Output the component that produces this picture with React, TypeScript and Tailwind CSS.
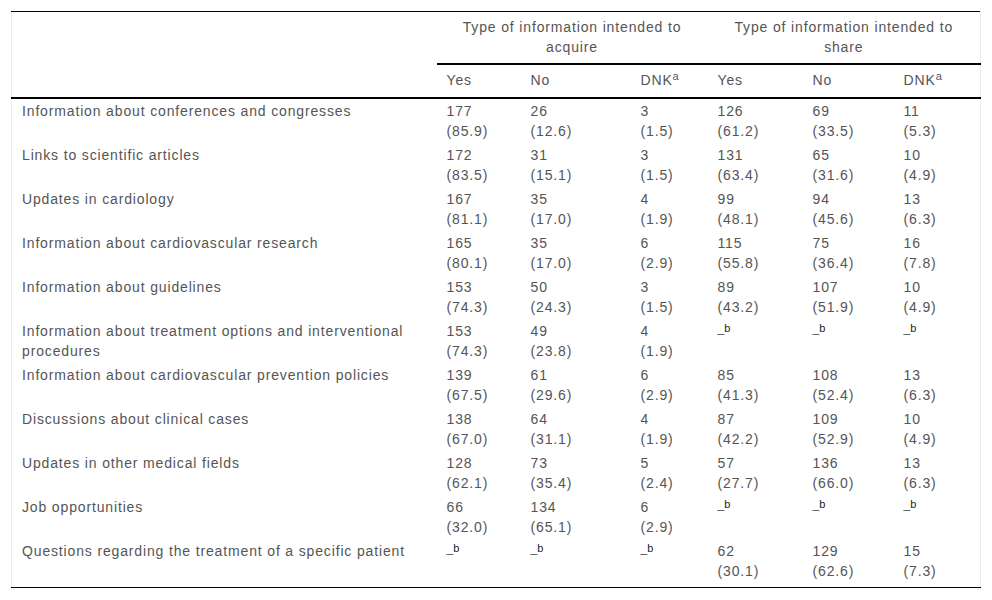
import React from "react";

type Cell = [string, string] | null;
const rows: { label: string[]; cells: Cell[] }[] = [
  { label: ["Information about conferences and congresses"], cells: [["177", "(85.9)"], ["26", "(12.6)"], ["3", "(1.5)"], ["126", "(61.2)"], ["69", "(33.5)"], ["11", "(5.3)"]] },
  { label: ["Links to scientific articles"], cells: [["172", "(83.5)"], ["31", "(15.1)"], ["3", "(1.5)"], ["131", "(63.4)"], ["65", "(31.6)"], ["10", "(4.9)"]] },
  { label: ["Updates in cardiology"], cells: [["167", "(81.1)"], ["35", "(17.0)"], ["4", "(1.9)"], ["99", "(48.1)"], ["94", "(45.6)"], ["13", "(6.3)"]] },
  { label: ["Information about cardiovascular research"], cells: [["165", "(80.1)"], ["35", "(17.0)"], ["6", "(2.9)"], ["115", "(55.8)"], ["75", "(36.4)"], ["16", "(7.8)"]] },
  { label: ["Information about guidelines"], cells: [["153", "(74.3)"], ["50", "(24.3)"], ["3", "(1.5)"], ["89", "(43.2)"], ["107", "(51.9)"], ["10", "(4.9)"]] },
  { label: ["Information about treatment options and interventional", "procedures"], cells: [["153", "(74.3)"], ["49", "(23.8)"], ["4", "(1.9)"], null, null, null] },
  { label: ["Information about cardiovascular prevention policies"], cells: [["139", "(67.5)"], ["61", "(29.6)"], ["6", "(2.9)"], ["85", "(41.3)"], ["108", "(52.4)"], ["13", "(6.3)"]] },
  { label: ["Discussions about clinical cases"], cells: [["138", "(67.0)"], ["64", "(31.1)"], ["4", "(1.9)"], ["87", "(42.2)"], ["109", "(52.9)"], ["10", "(4.9)"]] },
  { label: ["Updates in other medical fields"], cells: [["128", "(62.1)"], ["73", "(35.4)"], ["5", "(2.4)"], ["57", "(27.7)"], ["136", "(66.0)"], ["13", "(6.3)"]] },
  { label: ["Job opportunities"], cells: [["66", "(32.0)"], ["134", "(65.1)"], ["6", "(2.9)"], null, null, null] },
  { label: ["Questions regarding the treatment of a specific patient"], cells: [null, null, null, ["62", "(30.1)"], ["129", "(62.6)"], ["15", "(7.3)"]] },
];

function Dash() {
  return (
    <span className="relative top-[-4px] text-[12px] leading-none tracking-normal">
      <span className="text-[#555]">_</span>
      <span className="text-[#222] text-[11px]">b</span>
    </span>
  );
}

function Sup() {
  return <span className="relative top-[-5px] text-[11px] leading-none tracking-normal">a</span>;
}

export default function App() {
  return (
    <div className="bg-white w-[992px] h-[600px] pt-[11px] pl-[11px]" style={{ fontFamily: '"Liberation Sans", Arial, sans-serif' }}>
      <table className="w-[969px] border-collapse table-fixed text-[14px] leading-[20px] tracking-[0.85px] text-[#555] border-t border-t-black border-b border-b-black border-x border-x-[#ececec]">
        <colgroup>
          <col className="w-[425px]" />
          <col className="w-[84px]" />
          <col className="w-[110px]" />
          <col className="w-[77px]" />
          <col className="w-[95px]" />
          <col className="w-[91px]" />
          <col className="w-[87px]" />
        </colgroup>
        <thead>
          <tr>
            <th rowSpan={2} className="border-b-2 border-b-black"></th>
            <th colSpan={3} className="font-normal text-center pt-[5px] pb-[6px] px-[6px] border-b-2 border-b-black">
              Type of information intended to
              <br />
              acquire
            </th>
            <th colSpan={3} className="font-normal text-center pt-[5px] pb-[6px] px-[6px] border-b-2 border-b-black">
              Type of information intended to
              <br />
              share
            </th>
          </tr>
          <tr>
            {["Yes", "No", "DNK", "Yes", "No", "DNK"].map((h, i) => (
              <th key={i} className="font-normal text-left pl-[10px] pt-[5px] pb-[7px] border-b-2 border-b-black">
                {h}
                {h === "DNK" && <Sup />}
              </th>
            ))}
          </tr>
        </thead>
        <tbody>
          {rows.map((r, ri) => {
            const last = ri === rows.length - 1;
            const pad = last ? "pt-[2px] pb-[6px]" : "pt-[2px] pb-[2px]";
            return (
              <tr key={ri}>
                <td className={`align-top pl-[10px] pr-[4px] ${pad}`}>
                  {r.label.map((l, li) => (
                    <div key={li} className="whitespace-nowrap">{l}</div>
                  ))}
                </td>
                {r.cells.map((c, ci) => (
                  <td key={ci} className={`align-top pl-[10px] ${pad}`}>
                    {c ? (
                      <>
                        <div>{c[0]}</div>
                        <div>{c[1]}</div>
                      </>
                    ) : (
                      <div className="h-[40px]">
                        <Dash />
                      </div>
                    )}
                  </td>
                ))}
              </tr>
            );
          })}
        </tbody>
      </table>
    </div>
  );
}
